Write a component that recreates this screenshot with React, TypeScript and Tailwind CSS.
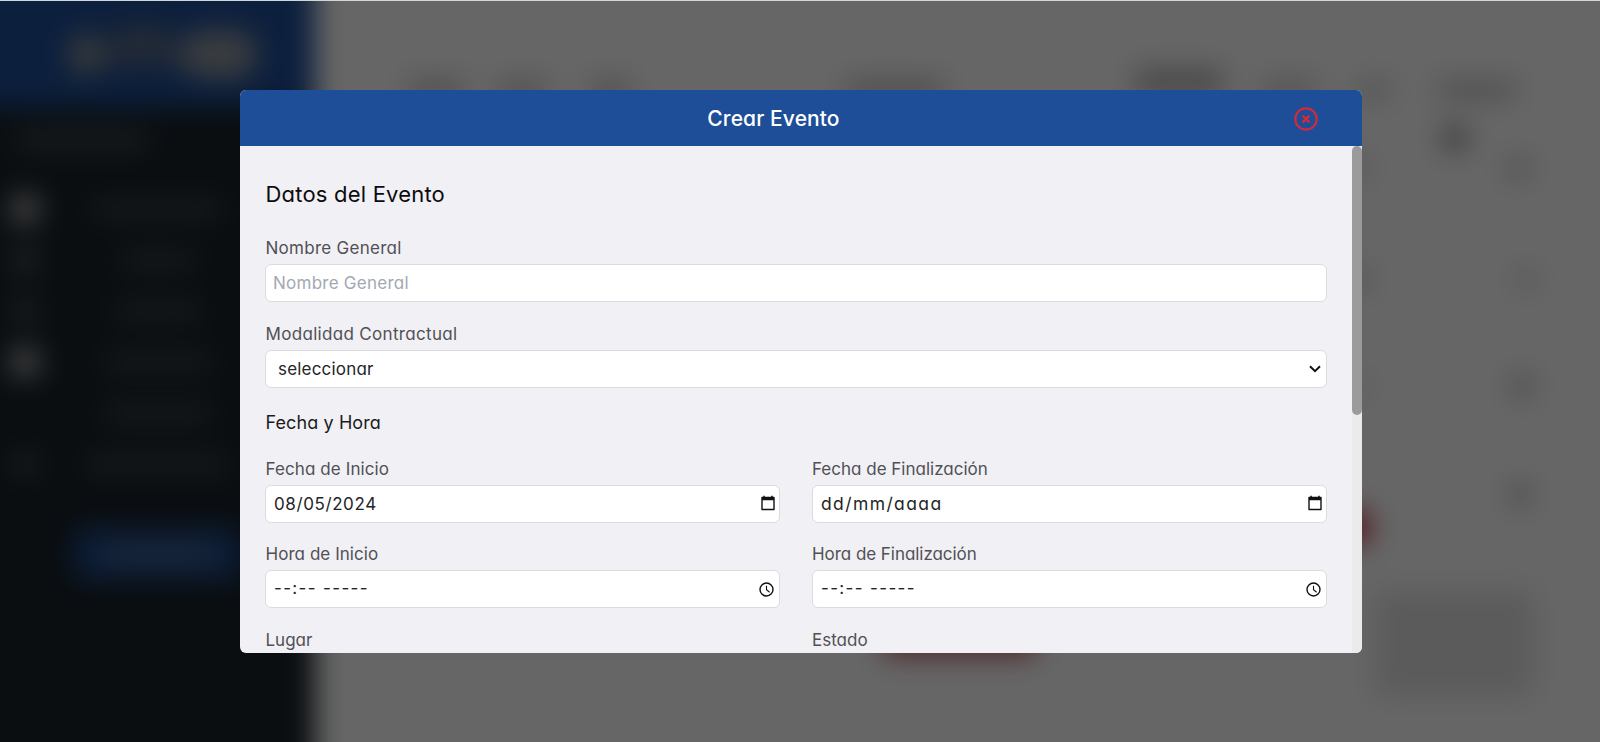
import type { ReactNode } from "react";

function SidebarRow({ icon, text }: { icon: string; text: string }) {
  return (
    <div className="flex h-[51px] items-center">
      <div className="flex w-[50px] justify-center">
        <div className={`rounded ${icon}`} />
      </div>
      <div className="flex w-[216px] justify-center">
        <div className={`h-4 bg-[#45474d] ${text}`} />
      </div>
    </div>
  );
}

function Sidebar() {
  return (
    <aside className="h-full w-[355px] shrink-0 bg-[#19232b]">
      <div className="flex h-[147px] items-center bg-[#1e4e98] pt-10 pl-[108px]">
        <div className="h-10 w-9 rounded-full bg-[#8f9295]" />
        <div className="mb-5 h-11 w-[76px] rounded-t-full bg-[#586983]" />
        <div className="h-12 w-[78px] rounded-full bg-[#94989e]" />
      </div>
      <div className="pl-10">
        <div className="flex h-[76px] items-center pb-2 pl-4">
          <div className="h-4 w-[132px] bg-[#4c4d52]" />
        </div>
        <SidebarRow icon="h-7 w-7 bg-[#b4b4b4]" text="w-[130px]" />
        <SidebarRow icon="h-6 w-6 bg-[#5c5e62]" text="w-[76px]" />
        <SidebarRow icon="h-6 w-6 bg-[#505256]" text="w-[86px]" />
        <SidebarRow icon="h-7 w-7 bg-[#b4b4b4]" text="w-[106px]" />
        <SidebarRow icon="h-0 w-0" text="w-[106px]" />
        <SidebarRow icon="h-6 w-6 bg-[#484a4f]" text="w-[142px]" />
        <div className="pt-10 pl-[75px]">
          <div className="flex h-[50px] w-[165px] items-center justify-center rounded bg-[#1e4a90]">
            <div className="h-3 w-[110px] bg-[#5e738f]" />
          </div>
        </div>
      </div>
    </aside>
  );
}

function Events() {
  return (
    <main className="flex h-full flex-1 bg-white pt-10 pr-10">
      <div className="flex flex-1 flex-col">
        <div className="flex h-[98px] items-end pl-[94px]">
          <div className="h-4 w-[54px] bg-[#b4b4b4]" />
          <div className="ml-9 h-4 w-[46px] bg-[#b8b8b8]" />
          <div className="ml-12 h-4 w-9 bg-[#b0b0b0]" />
          <div className="ml-[217px] h-4 w-[96px] bg-[#b0b0b0]" />
          <div className="mb-1 ml-[194px] h-6 w-[86px] bg-[#aeaeae]" />
        </div>
        <div className="mt-[522px] ml-[567px] h-9 w-[155px] rounded-lg bg-[#c06068]" />
      </div>
      <div className="flex w-[340px] flex-col pt-[82px]">
        <div className="flex h-4 items-center">
          <div className="ml-1 h-4 w-[50px] bg-[#c0c0c0]" />
          <div className="ml-[46px] h-4 w-7 bg-[#c4c4c4]" />
          <div className="ml-[51px] h-4 w-[76px] bg-[#bcbcbc]" />
        </div>
        <div className="flex h-[26px] pt-7 pl-[183px]">
          <div className="h-6 w-6 shrink-0 rounded-full bg-[#7c7c7c]" />
        </div>
        <div className="flex h-[84px] items-center justify-between pr-[72px] pl-[90px]">
          <div className="h-5 w-4 rounded-full bg-[#c4c4c4]" />
          <div className="h-5 w-5 rounded-full bg-[#b0b0b0]" />
        </div>
        <div className="flex h-[137px] items-center justify-between pr-[66px] pl-[90px]">
          <div className="h-5 w-4 rounded-full bg-[#b0b0b0]" />
          <div className="h-4 w-4 rounded-full bg-[#b8b8b8]" />
        </div>
        <div className="flex h-[78px] items-center justify-between pr-[68px] pl-[90px]">
          <div className="h-4 w-4 rounded-full bg-[#d0d0d0]" />
          <div className="h-5 w-5 rounded-full bg-[#a4a4a4]" />
        </div>
        <div className="flex h-[140px] items-center justify-end pr-[70px]">
          <div className="h-5 w-5 rounded-full bg-[#a4a4a4]" />
        </div>
        <div className="-mt-[54px] ml-[70px] h-8 w-[40px] rounded bg-[#c8323f]" />
        <div className="mt-[48px] ml-[115px] h-[105px] w-[158px] rounded bg-[#e3e3e3]" />
      </div>
    </main>
  );
}

function CloseIcon() {
  return (
    <svg className="h-6 w-6" viewBox="0 0 24 24" fill="none" stroke="#cf2b3d">
      <circle cx="12" cy="12" r="10.7" strokeWidth="2.2" />
      <path d="m8.6 8.6 6.8 6.8M15.4 8.6l-6.8 6.8" strokeWidth="2.6" />
    </svg>
  );
}

function CalendarIcon() {
  return (
    <svg className="mr-[4px] mb-[2px] h-[16px] w-[14px]" viewBox="0 0 14 16" fill="none">
      <path d="M1 2.5h12v12H1z" stroke="#111" strokeWidth="1.4" strokeLinejoin="round" />
      <path d="M1 2.2h12v3H1zM2.3.7h1.5v2H2.3zM10.2.7h1.5v2h-1.5z" fill="#111" />
    </svg>
  );
}

function ClockIcon() {
  return (
    <svg className="mr-[5px] h-[15px] w-[15px]" viewBox="0 0 15 15" fill="none" stroke="#111">
      <circle cx="7.5" cy="7.5" r="6.5" strokeWidth="1.4" />
      <path d="M7.5 3.7v4.1l3.1 2.4" strokeWidth="1.1" />
    </svg>
  );
}

function Field({
  label,
  labelClass,
  children,
}: {
  label: string;
  labelClass: string;
  children?: ReactNode;
}) {
  return (
    <div className="flex flex-1 flex-col">
      <div className={`h-[33px] pt-[5px] text-[17px] leading-6 whitespace-nowrap text-[#505055] ${labelClass}`}>
        {label}
      </div>
      <div className="flex h-[38px] items-center justify-between rounded-md border border-[#dcdce0] bg-white text-[17px] whitespace-nowrap text-[#242427]">
        {children}
      </div>
    </div>
  );
}

export default function App() {
  return (
    <div className="relative h-[742px] w-[1600px] overflow-hidden font-['Inter',sans-serif] [font-feature-settings:'cv11','calt'_0]">
      <div className="absolute -inset-10 flex blur-[14px]">
        <Sidebar />
        <Events />
      </div>
      <div className="absolute inset-0 flex items-start justify-center border-t border-[#cfd7d9] bg-black/60 pt-[89px] pl-[2px]">
        <section className="flex h-[563px] w-[1122px] flex-col overflow-hidden rounded-md bg-[#f1f0f5]">
          <header className="flex h-[56px] shrink-0 items-center bg-[#1e4e98]">
            <h2 className="flex-1 pt-px pl-[13px] text-center text-[21px] font-medium tracking-[0.1px] text-white">
              Crear Evento
            </h2>
            <button className="mt-[2px] mr-[44px]">
              <CloseIcon />
            </button>
          </header>
          <div className="flex min-h-0 flex-1">
            <div className="min-w-0 flex-1 overflow-hidden pt-[32px] pr-[25px] pl-[25px]">
              <h3 className="h-[53px] pl-[0.5px] text-[22px] leading-8 tracking-[0.2px] text-[#0c0c0e]">Datos del Evento</h3>
              <div className="flex flex-col gap-[14.5px]">
                <Field label="Nombre General" labelClass="pl-[0.5px] tracking-[0.27px]">
                  <span className="pt-[2px] pl-[7px] tracking-[0.25px] text-[#a3a8b3]">Nombre General</span>
                </Field>
                <Field label="Modalidad Contractual" labelClass="pl-[0.5px] tracking-[0.32px]">
                  <span className="pt-[2px] pl-[12px] tracking-[0.2px]">seleccionar</span>
                  <svg className="mr-[5px] h-2 w-3" viewBox="0 0 12 8" fill="none">
                    <path d="M1 1.3 6 6.2l5-4.9" stroke="#111" strokeWidth="2" />
                  </svg>
                </Field>
              </div>
              <h4 className="mt-[20px] h-[44px] pt-px pl-[0.5px] text-[18px] leading-7 tracking-[0.1px] text-[#1c1c1e]">Fecha y Hora</h4>
              <div className="flex flex-col gap-[14.5px]">
                <div className="flex gap-8">
                  <Field label="Fecha de Inicio" labelClass="pl-[0.5px] tracking-[0.1px]">
                    <span className="pt-[2px] pl-[8px] tracking-[0.6px]">08/05/2024</span>
                    <CalendarIcon />
                  </Field>
                  <Field label="Fecha de Finalización" labelClass="tracking-[0px]">
                    <span className="pt-[2px] pl-[8px] text-[17.5px] tracking-[1.4px]">dd/mm/aaaa</span>
                    <CalendarIcon />
                  </Field>
                </div>
                <div className="flex gap-8">
                  <Field label="Hora de Inicio" labelClass="pl-[0.5px] tracking-[0.05px]">
                    <span className="pl-[8px] tracking-[1.35px]">--:-- -----</span>
                    <ClockIcon />
                  </Field>
                  <Field label="Hora de Finalización" labelClass="tracking-[-0.05px]">
                    <span className="pl-[8px] tracking-[1.35px]">--:-- -----</span>
                    <ClockIcon />
                  </Field>
                </div>
                <div className="flex gap-8">
                  <Field label="Lugar" labelClass="pl-[0.5px] tracking-[0px]" />
                  <Field label="Estado" labelClass="tracking-[0px]" />
                </div>
              </div>
            </div>
            <div className="w-[10px] shrink-0 bg-[#ebebec]">
              <div className="h-[269px] rounded-full bg-[#9b9b9b]" />
            </div>
          </div>
        </section>
      </div>
    </div>
  );
}
